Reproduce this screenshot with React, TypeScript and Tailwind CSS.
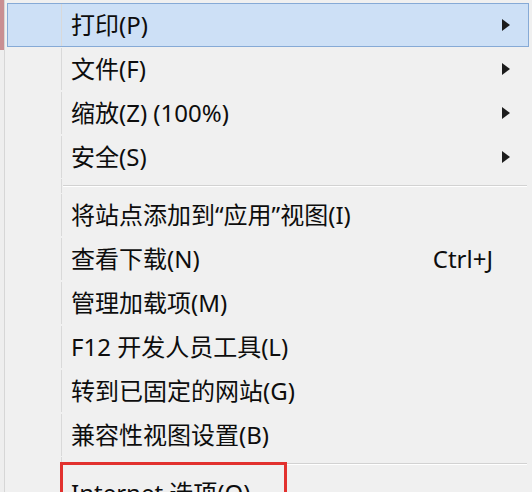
import React from 'react';

type Item = { label: string; shortcut?: string; sub?: boolean; active?: boolean };

const groups: Item[][] = [
  [
    { label: '打印(P)', sub: true, active: true },
    { label: '文件(F)', sub: true },
    { label: '缩放(Z) (100%)', sub: true },
    { label: '安全(S)', sub: true },
  ],
  [
    { label: '将站点添加到“应用”视图(I)' },
    { label: '查看下载(N)', shortcut: 'Ctrl+J' },
    { label: '管理加载项(M)' },
    { label: 'F12 开发人员工具(L)' },
    { label: '转到已固定的网站(G)' },
    { label: '兼容性视图设置(B)' },
  ],
  [{ label: 'Internet 选项(O)' }],
];

function Arrow() {
  return (
    <svg width="8" height="12" viewBox="0 0 8 12" className="block">
      <polygon points="0,0 8,6 0,12" fill="#1c1c1c" />
    </svg>
  );
}

function Row({ item }: { item: Item }) {
  return (
    <div
      className={`flex h-[44px] items-stretch ${
        item.active ? 'border border-[#86aad6] bg-[#cde0f6]' : 'border border-transparent'
      }`}
    >
      {/* icon gutter */}
      <div className="w-[54px] shrink-0 border-r border-[#d9d9d9]" />
      <div className="flex flex-1 items-center pl-[9px] pr-[18px]">
        <span className="flex-1 whitespace-nowrap">{item.label}</span>
        {item.shortcut && <span className="mr-[17px]">{item.shortcut}</span>}
        {item.sub && <Arrow />}
      </div>
    </div>
  );
}

function Separator() {
  return (
    <div className="flex h-[14px] items-stretch">
      <div className="w-[55px] shrink-0 border-r border-[#d9d9d9]" />
      <div className="flex flex-1 items-center pl-[1px] pr-[2px]">
        <div className="h-[2px] w-full border-t border-[#d2d2d2] border-b border-b-white" />
      </div>
    </div>
  );
}

export default function App() {
  return (
    <div
      className="relative flex h-[492px] w-[532px] overflow-hidden bg-[#f3f3f3] text-[24px] leading-none text-[#0d0d0d]"
      style={{ fontFamily: '"Noto Sans", "Noto Sans CJK SC", sans-serif' }}
    >
      {/* sliver of the window behind */}
      <div className="flex w-[5px] shrink-0 flex-col border-r border-[#d6d6d6]">
        <div className="h-[50px] bg-[#c98f92]" />
        <div className="flex-1 bg-[#eeeeee]" />
      </div>

      <div className="flex-1 bg-[#f0f0f0] pl-[2px] pr-[3px] pt-[3px]">
        {groups.map((g, gi) => (
          <div key={gi}>
            {gi > 0 && <Separator />}
            {g.map((it) => (
              <Row key={it.label} item={it} />
            ))}
          </div>
        ))}
      </div>

      {/* red annotation box */}
      <div className="absolute left-[60px] top-[462px] h-[44px] w-[227px] border-[3px] border-[#e2312e]" />
    </div>
  );
}
